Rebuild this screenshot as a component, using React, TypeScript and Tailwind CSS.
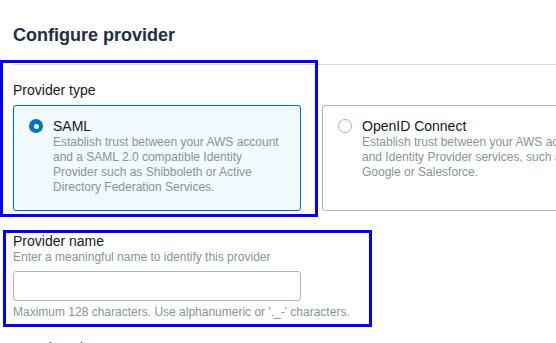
const font = { fontFamily: '"Liberation Sans", Arial, sans-serif' };

function RadioCard({
  title,
  lines,
  selected,
}: {
  title: string;
  lines: string[];
  selected?: boolean;
}) {
  return (
    <div
      className={
        selected
          ? "flex gap-[10px] rounded-[3px] border border-[#0073bb] bg-[#f1faff] pl-[15px] pr-3 pt-[12px] pb-[15px]"
          : "flex gap-[10px] rounded-[3px] border border-[#aab7b8] bg-white pl-[15px] pr-3 pt-[12px] pb-[15px]"
      }
    >
      <div className="pt-[1px]">
        {selected ? (
          <div className="flex h-[14px] w-[14px] items-center justify-center rounded-full bg-[#0073bb]">
            <div className="h-[5px] w-[5px] rounded-full bg-white" />
          </div>
        ) : (
          <div className="h-[14px] w-[14px] rounded-full border border-[#aab7b8] bg-white" />
        )}
      </div>
      <div className="min-w-0">
        <div className="text-[14px] leading-[16px] text-[#16191f]">{title}</div>
        <div className="mt-[1px] text-[12px] leading-[15px] text-[#879596] whitespace-nowrap">
          {lines.map((l) => (
            <div key={l}>{l}</div>
          ))}
        </div>
      </div>
    </div>
  );
}

export default function App() {
  return (
    <div className="relative h-[343px] w-[556px] overflow-hidden bg-white" style={font}>
      <div className="pl-[13px] pt-[24px]">
        <h2 className="text-[18px] font-bold leading-[22px] text-[#232f3e]">Configure provider</h2>
        <div className="mt-[18px] border-t border-[#d5dbdb]" />

        <div className="mt-[17px] text-[14px] leading-[17px] text-[#16191f]">Provider type</div>
        <div className="mt-[6px] grid w-[620px] grid-cols-[288px_288px] gap-[21px]">
          <RadioCard
            selected
            title="SAML"
            lines={[
              "Establish trust between your AWS account",
              "and a SAML 2.0 compatible Identity",
              "Provider such as Shibboleth or Active",
              "Directory Federation Services.",
            ]}
          />
          <RadioCard
            title="OpenID Connect"
            lines={[
              "Establish trust between your AWS account",
              "and Identity Provider services, such as",
              "Google or Salesforce.",
            ]}
          />
        </div>

        <div className="mt-[22px] text-[14px] leading-[17px] text-[#16191f]">Provider name</div>
        <div className="text-[12px] leading-[15px] text-[#879596]">
          Enter a meaningful name to identify this provider
        </div>
        <input
          type="text"
          className="mt-[6px] block h-[30px] w-[288px] rounded-[3px] border border-[#aab7b8] bg-white px-2 text-[14px] outline-none"
        />
        <div className="mt-[4px] text-[12px] leading-[15px] text-[#879596]">
          Maximum 128 characters. Use alphanumeric or '._-' characters.
        </div>

        <div className="mt-[20px] text-[14px] leading-[17px] text-[#16191f]">Metadata document</div>
      </div>

      {/* annotation boxes */}
      <div className="pointer-events-none absolute left-0 top-[60px] h-[157px] w-[318px] border-[3px] border-[#0000ff]" />
      <div className="pointer-events-none absolute left-[3px] top-[230px] h-[97px] w-[369px] border-[3px] border-[#0000ff]" />
    </div>
  );
}
